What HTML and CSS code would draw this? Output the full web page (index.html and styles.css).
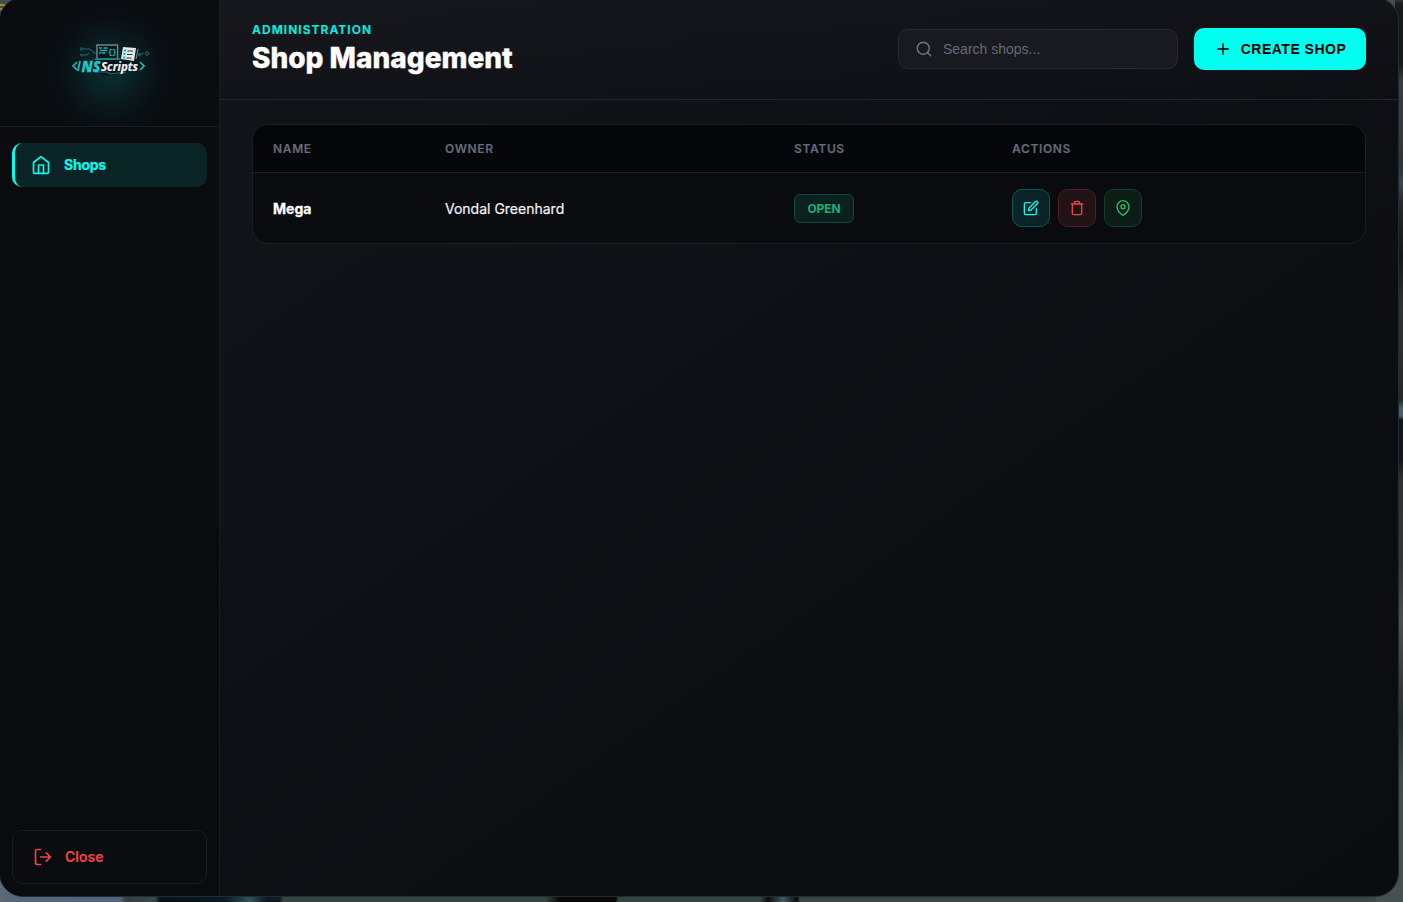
FILE: index.html
```html
<!DOCTYPE html>
<html lang="en">
<head>
<meta charset="utf-8">
<title>Shop Management</title>
<link rel="stylesheet" href="styles.css">
</head>
<body>
<div class="panel">
  <aside class="sidebar">
    <div class="brand">
      <svg class="logo" width="80" height="34" viewBox="0 0 80 34">
        <path d="M9 23 24 17H62L72 23 58 28 38 33 18 28Z" fill="#031217"/>
        <g fill="none" stroke="#147179" stroke-width="1">
          <path d="M12 6h7l4 4h3M12 12h4l2-2M67 11h4l2-1"/>
          <circle cx="10.500" cy="6" r="1.300"/><circle cx="10.500" cy="12" r="1"/>
          <circle cx="76" cy="10.500" r="1.700"/><circle cx="68.500" cy="12" r="1"/>
        </g>
        <path d="M26 15V2h20.500V15" fill="#06161b" stroke="#75848a" stroke-width="1.400"/>
        <path d="M23 17h27l-2-2H25Z" fill="#168388"/>
        <path d="M28 5h3M32.500 5h4M29 7.500h7M28 10h2M31 10h3" stroke="#17b5b6" stroke-width="1.300"/>
        <text class="code" x="37" y="11">{}</text>
        <path d="M52 4 65 5 63 18 50 16Z" fill="#e2e7e9"/>
        <path d="M56.500 8h5.500M56 11.500h5.500M55.500 15h5" stroke="#263a42" stroke-width="1"/>
        <path d="M53 7.500h2M52.500 11h2M52 14.500h2" stroke="#0bb" stroke-width="1.800"/>
        <path d="M67 6l-2 10" stroke="#9aa5aa" stroke-width=".8"/>
        <path d="M24 29h12l3 2 16-2" fill="none" stroke="#147e82" stroke-width="1.200"/>
        <path d="M6 19 2 23 6 27M9 18 7 28M69 19l4 4-4 4" fill="none" stroke="#18bdbb" stroke-width="1.700"/>
        <text class="logo-ns" x="10.500" y="28.500" textLength="19" lengthAdjust="spacingAndGlyphs">NS</text>
        <text class="logo-scripts" x="30" y="28" textLength="37" lengthAdjust="spacingAndGlyphs">Scripts</text>
      </svg>
    </div>
    <nav class="nav">
      <a class="nav-item">
        <svg class="icon" width="20" height="20" viewBox="0 0 24 24"><path d="m3 9 9-7 9 7v11a2 2 0 0 1-2 2H5a2 2 0 0 1-2-2z"/><path d="M9 22V12h6v10"/></svg>
        <span>Shops</span>
      </a>
    </nav>
    <div class="sidebar-footer">
      <button class="close">
        <svg class="icon" width="20" height="20" viewBox="0 0 24 24"><path d="M9 21H5a2 2 0 0 1-2-2V5a2 2 0 0 1 2-2h4"/><path d="m16 17 5-5-5-5M21 12H9"/></svg>
        <span>Close</span>
      </button>
    </div>
  </aside>
  <main class="main">
    <header class="header">
      <div class="heading">
        <div class="eyebrow">ADMINISTRATION</div>
        <h1>Shop Management</h1>
      </div>
      <div class="tools">
        <label class="search">
          <svg class="icon" width="18" height="18" viewBox="0 0 24 24"><circle cx="11" cy="11" r="8"/><path d="m21 21-4.350-4.350"/></svg>
          <input type="text" placeholder="Search shops...">
        </label>
        <button class="create">
          <svg class="icon" width="18" height="18" viewBox="0 0 24 24"><path d="M12 5v14M5 12h14"/></svg>
          <span>CREATE SHOP</span>
        </button>
      </div>
    </header>
    <section class="table">
      <div class="row table-head">
        <span>NAME</span><span>OWNER</span><span>STATUS</span><span>ACTIONS</span>
      </div>
      <div class="row table-row">
        <strong>Mega</strong>
        <span class="owner">Vondal Greenhard</span>
        <span><span class="badge">OPEN</span></span>
        <div class="actions">
          <button class="action edit"><svg class="icon" width="16" height="16" viewBox="0 0 24 24"><path d="M11 4H4a2 2 0 0 0-2 2v14a2 2 0 0 0 2 2h14a2 2 0 0 0 2-2v-7"/><path d="M18.500 2.500a2.121 2.121 0 0 1 3 3L12 15l-4 1 1-4z"/></svg></button>
          <button class="action delete"><svg class="icon" width="16" height="16" viewBox="0 0 24 24"><path d="M3.500 6h17M19 6v14a2 2 0 0 1-2 2H7a2 2 0 0 1-2-2V6m3 0V4a2 2 0 0 1 2-2h4a2 2 0 0 1 2 2v2"/></svg></button>
          <button class="action locate"><svg class="icon" width="16" height="16" viewBox="0 0 24 24"><path d="M21 10c0 7-9 13-9 13s-9-6-9-13a9 9 0 0 1 18 0z"/><circle cx="12" cy="10" r="3"/></svg></button>
        </div>
      </div>
    </section>
  </main>
</div>
</body>
</html>
```
FILE: styles.css
```css
* { box-sizing: border-box; }
html, body { height: 100%; }
body {
  margin: 0;
  overflow: hidden;
  display: flow-root;
  font-family: Inter, sans-serif;
  color: #fff;
  background:
    linear-gradient(#a98425, #a98425) 0 4px / 5px 2px no-repeat,
    linear-gradient(#a98425, #a98425) 0 8px / 2px 2px no-repeat,
    linear-gradient(90deg, #626b70 0, #56677c 8px, #53647b 120px, #343e40 126px, #39484a 155px, #071016 160px, #0a1923 225px, #36515d 250px, #101a22 266px, #101a22 280px, #344443 283px, #344443 545px, #080808 560px, #080808 616px, #344443 618px, #344443 760px, #0a0c0e 768px, #415b5d 783px, #0a0c0e 797px, #3b4746 800px, #3b4746 100%) 0 100% / 1376px 6px no-repeat,
    linear-gradient(#46504e, #46504e) 100% 100% / 27px 30px no-repeat,
    linear-gradient(#626b70, #56677c) 0 100% / 24px 30px no-repeat,
    linear-gradient(#303434 0, #17191a 4px, #17191a 65px, #3a3b3e 80px, #303339 170px, #3b4653 183px, #242629 205px, #151719 255px, #303234 310px, #242827 400px, #4b5b6b 408px, #4b5b6b 416px, #14171a 420px, #14171a 460px, #303334 480px, #303435 560px, #4d4d4d 620px, #292e2f 720px, #424b4a 780px, #46504e 100%) 100% 0 / 8px 100% no-repeat,
    #414a4d;
}
button { font-family: inherit; }
.icon { display: block; flex: none; fill: none; stroke: currentColor; stroke-width: 2; stroke-linecap: round; stroke-linejoin: round; }

.panel {
  display: flex;
  width: 1400px;
  height: 900px;
  margin: -3px 0 0 -1px;
  border: 1px solid #1d2e31;
  border-radius: 24px;
  overflow: hidden;
  background: linear-gradient(145deg, #14151a 0%, #111217 30%, #0d0e12 65%, #0b0c10 100%);
}
.sidebar {
  display: flex;
  flex-direction: column;
  width: 220px;
  background: #090b0f;
  border-right: 1px solid #1b1c20;
}
.brand {
  display: flex;
  justify-content: center;
  height: 129px;
  padding: 45px 0 0 2px;
  border-bottom: 1px solid #1b1c20;
  background: radial-gradient(circle at 110px 72px, #0a2d30 0, #0a2427 20px, #0a181c 36px, #090f13 54px, #090b0f 74px);
}
.logo-ns { font: italic 800 16px "Open Sans", sans-serif; fill: #1ac8c6; stroke: #1ac8c6; stroke-width: .3; }
.logo-scripts { font: italic 700 12.5px "Open Sans", sans-serif; fill: #f2f5f5; stroke: #f2f5f5; stroke-width: .2; }
.code { font: 700 8px "Liberation Mono", monospace; fill: #17b5b6; letter-spacing: -1px; }
.nav { flex: 1; padding: 16px 12px; }
.nav-item {
  display: flex;
  align-items: center;
  gap: 13px;
  height: 44px;
  padding-left: 16px;
  border-left: 3px solid #00fff0;
  border-radius: 10px;
  background: #0a2324;
  color: #00fff0;
  font-size: 14px;
  font-weight: 700;
  letter-spacing: -0.25px;
  -webkit-text-stroke: .2px #00fff0;
}
.nav-item span, .close span { padding-bottom: 2px; }
.sidebar-footer { padding: 12px; }
.close {
  display: flex;
  align-items: center;
  gap: 12px;
  width: 100%;
  height: 54px;
  padding: 0 20px;
  border: 1px solid #1b1c20;
  border-radius: 10px;
  background: transparent;
  color: #ef4444;
  font-size: 14px;
  font-weight: 600;
  -webkit-text-stroke: .15px #ef4444;
}

.main { flex: 1; }
.header {
  display: flex;
  justify-content: space-between;
  height: 102px;
  padding: 24px 32px 0;
  border-bottom: 1px solid #25262b;
  background: linear-gradient(rgba(255,255,255,.015), transparent);
}
.eyebrow { font-size: 12px; line-height: 15px; font-weight: 700; letter-spacing: 1px; color: #00f0e2; }
h1 { margin: 4px 0 0; font-size: 28px; line-height: 35px; font-weight: 800; letter-spacing: 0; -webkit-text-stroke: .35px #fff; }
.tools { display: flex; align-items: flex-start; gap: 16px; padding-top: 6px; }
.search {
  display: flex;
  align-items: center;
  gap: 10px;
  width: 280px;
  height: 40px;
  margin-top: 1px;
  padding: 0 16px;
  border: 1px solid #292a2f;
  border-radius: 10px;
  background: #191a1f;
  color: #6b7280;
}
.search input { flex: 1; min-width: 0; padding: 0; border: 0; outline: 0; background: none; color: #fff; font: 14px "Liberation Sans", Arial, sans-serif; }
.search input::placeholder { color: #646a77; }
.create {
  display: flex;
  align-items: center;
  justify-content: center;
  gap: 9px;
  width: 172px;
  height: 42px;
  padding: 0;
  border: 0;
  border-radius: 10px;
  background: #00fff0;
  color: #000;
  font: 700 14px "Liberation Sans", Arial, sans-serif;
  letter-spacing: 0.5px;
}

.table {
  margin: 24px 32px 0;
  border: 1px solid #1d1e22;
  border-radius: 16px;
  overflow: hidden;
  background: #0a0b0f;
}
.row { display: grid; grid-template-columns: 172px 349px 218px 1fr; align-items: center; padding-left: 20px; }
.table-head { height: 48px; border-bottom: 1px solid #1c1d21; background: #050609; color: #646a77; font-size: 12px; font-weight: 600; letter-spacing: 0.65px; -webkit-text-stroke: .15px #646a77; }
.table-row { height: 70px; font-size: 14px; }
.table-row strong { font-weight: 700; -webkit-text-stroke: .3px #fff; }
.owner { color: #f4f4f5; -webkit-text-stroke: .2px #f4f4f5; }
.badge {
  display: inline-flex;
  align-items: center;
  justify-content: center;
  width: 60px;
  height: 29px;
  border: 1px solid #0c4b3c;
  border-radius: 6px;
  background: #0b211f;
  color: #10b27c;
  font-size: 12px;
  font-weight: 700;
  letter-spacing: -0.1px;
  vertical-align: middle;
}
.actions { display: flex; gap: 8px; }
.action { display: flex; align-items: center; justify-content: center; width: 38px; height: 38px; padding: 0; border: 1px solid; border-radius: 10px; }
.edit { color: #00fff0; background: #092326; border-color: #08595c; }
.delete { color: #ef4444; background: #211216; border-color: #501f24; }
.locate { color: #22c55e; background: #0c1d18; border-color: #12432a; }
```
